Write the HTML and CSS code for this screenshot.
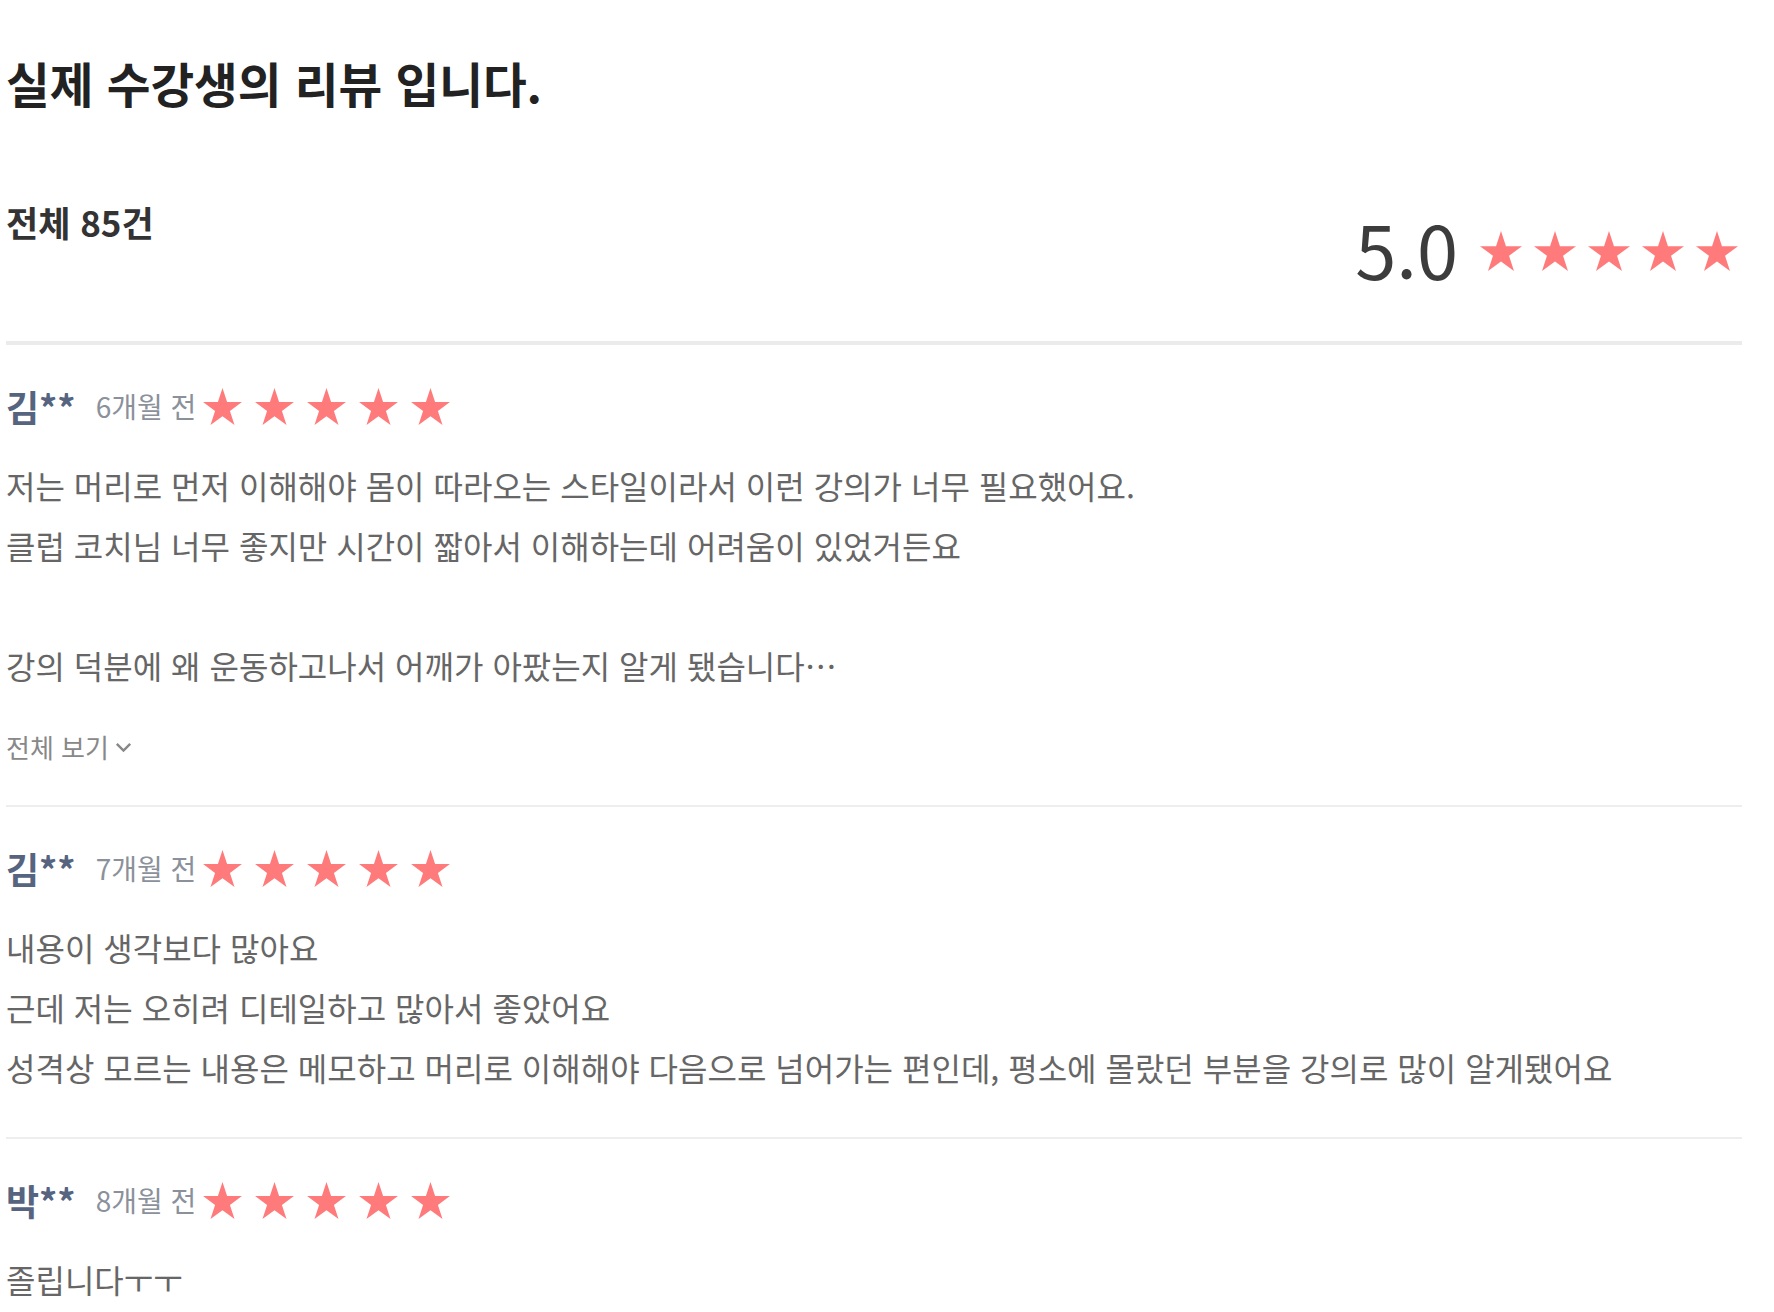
FILE: index.html
```html
<!DOCTYPE html>
<html lang="ko">
<head>
    <meta charset="UTF-8">
    <meta name="viewport" content="width=device-width, initial-scale=1.0">
    <title>수강생 리뷰</title>
    <link rel="stylesheet" href="styles.css">
</head>
<body>
    <svg class="defs" aria-hidden="true">
        <symbol id="star" viewBox="0 0 100 95.1">
            <polygon points="50,0 61.8,36.3 100,36.3 69.1,58.8 80.9,95.1 50,72.7 19.1,95.1 30.9,58.8 0,36.3 38.2,36.3" />
        </symbol>
    </svg>

    <div class="reviews">
        <h2 class="reviews-title">실제 수강생의 리뷰 입니다.</h2>

        <div class="summary">
            <div class="summary-count">전체 85건</div>
            <div class="summary-score">
                <span class="score">5.0</span>
                <div class="stars stars-lg">
                    <svg><use href="#star" /></svg>
                    <svg><use href="#star" /></svg>
                    <svg><use href="#star" /></svg>
                    <svg><use href="#star" /></svg>
                    <svg><use href="#star" /></svg>
                </div>
            </div>
        </div>

        <div class="review">
            <div class="review-head">
                <span class="review-name">김**</span>
                <span class="review-date">6개월 전</span>
                <div class="stars">
                    <svg><use href="#star" /></svg>
                    <svg><use href="#star" /></svg>
                    <svg><use href="#star" /></svg>
                    <svg><use href="#star" /></svg>
                    <svg><use href="#star" /></svg>
                </div>
            </div>
            <p class="review-body">저는 머리로 먼저 이해해야 몸이 따라오는 스타일이라서 이런 강의가 너무 필요했어요.<br>클럽 코치님 너무 좋지만 시간이 짧아서 이해하는데 어려움이 있었거든요<br><br>강의 덕분에 왜 운동하고나서 어깨가 아팠는지 알게 됐습니다…</p>
            <button class="more-btn">전체 보기
                <svg viewBox="0 0 14 9"><polyline points="1.5,1.5 7,7 12.5,1.5" /></svg>
            </button>
        </div>

        <div class="review">
            <div class="review-head">
                <span class="review-name">김**</span>
                <span class="review-date">7개월 전</span>
                <div class="stars">
                    <svg><use href="#star" /></svg>
                    <svg><use href="#star" /></svg>
                    <svg><use href="#star" /></svg>
                    <svg><use href="#star" /></svg>
                    <svg><use href="#star" /></svg>
                </div>
            </div>
            <p class="review-body">내용이 생각보다 많아요<br>근데 저는 오히려 디테일하고 많아서 좋았어요<br>성격상 모르는 내용은 메모하고 머리로 이해해야 다음으로 넘어가는 편인데, 평소에 몰랐던 부분을 강의로 많이 알게됐어요</p>
        </div>

        <div class="review">
            <div class="review-head">
                <span class="review-name">박**</span>
                <span class="review-date">8개월 전</span>
                <div class="stars">
                    <svg><use href="#star" /></svg>
                    <svg><use href="#star" /></svg>
                    <svg><use href="#star" /></svg>
                    <svg><use href="#star" /></svg>
                    <svg><use href="#star" /></svg>
                </div>
            </div>
            <p class="review-body">졸립니다ㅜㅜ</p>
        </div>
    </div>
</body>
</html>
```
FILE: styles.css
```css
* {
    margin: 0;
    padding: 0;
    box-sizing: border-box;
}

body {
    font-family: 'Noto Sans CJK KR', 'Noto Sans', sans-serif;
    background: #fff;
    color: #333;
}

.defs {
    display: none;
}

.reviews {
    width: 1736px;
    margin-left: 6px;
}

.reviews-title {
    margin-top: 51px;
    font-size: 47.5px;
    line-height: 64px;
    font-weight: 700;
    color: #222;
}

.summary {
    display: flex;
    justify-content: space-between;
    align-items: flex-start;
    margin-top: 85px;
    height: 145px;
    border-bottom: 4px solid #ebebeb;
}

.summary-count {
    font-size: 35px;
    line-height: 44px;
    font-weight: 700;
    color: #333;
}

.summary-score {
    display: flex;
    align-items: center;
    gap: 22px;
    margin-top: 8px;
    margin-right: 4px;
}

.score {
    font-size: 74px;
    line-height: 80px;
    color: #3c3c3c;
}

.stars {
    display: flex;
    gap: 13px;
    fill: #ff7b7b;
}

.stars svg {
    width: 39px;
    height: 37px;
}

.stars-lg {
    gap: 12px;
    margin-top: 6px;
}

.stars-lg svg {
    width: 42px;
    height: 40px;
}

.review {
    padding: 39px 0 40px;
    border-bottom: 2px solid #eee;
}

.review-head {
    display: flex;
    align-items: center;
    height: 44px;
    margin-bottom: 27px;
}

.review-name {
    font-size: 36px;
    font-weight: 700;
    color: #56647f;
    margin-right: 20px;
}

.review-date {
    font-size: 28px;
    color: #8b919b;
    margin-right: 7px;
}

.review-body {
    font-size: 32px;
    line-height: 60px;
    color: #666;
}

.more-btn {
    display: flex;
    align-items: center;
    gap: 6px;
    margin-top: 34px;
    border: none;
    background: none;
    font-family: inherit;
    font-size: 26px;
    line-height: 36px;
    color: #888;
    cursor: pointer;
}

.more-btn svg {
    width: 17px;
    height: 11px;
    fill: none;
    stroke: #888;
    stroke-width: 2;
}
```
